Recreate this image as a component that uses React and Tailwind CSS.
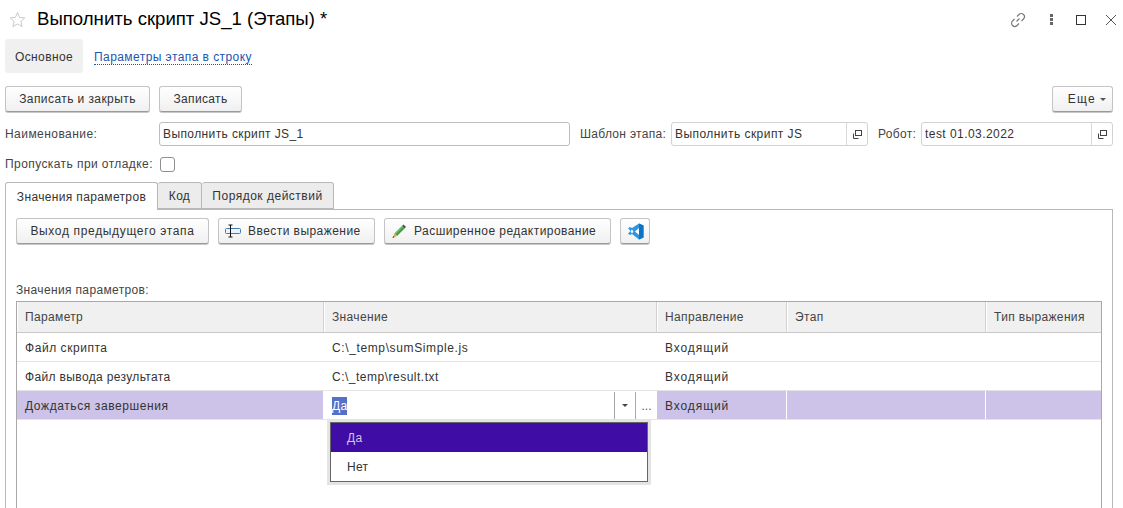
const Btn = ({ className = "", children }) => (
  <div className={"h-[26px] flex items-center rounded-[3px] border border-[#c4c4c4] border-b-[#9a9a9a] bg-gradient-to-b from-white to-[#f0f0f0] shadow-[0_1px_0_#c8c8c8] text-[12px] text-[#333] shrink-0 " + className}>
    {children}
  </div>
);

const Arrow = ({ color = "#555" }) => (
  <svg width="6" height="3" viewBox="0 0 6 3" fill={color}><path d="M0 0h6L3 3z" /></svg>
);

const Popout = () => (
  <svg width="11" height="11" viewBox="0 0 11 11" fill="none" stroke="#444">
    <rect x="3.5" y="1.5" width="6" height="5" />
    <path d="M1.500 4.500v5h5" />
  </svg>
);

const Field = ({ className = "", text }) => (
  <div className={"h-[24px] flex rounded-[3px] border border-[#d2d2d2] bg-white shrink-0 " + className}>
    <div className="flex-1 pl-[3px] flex items-center text-[12px] tracking-[0.45px] text-[#333]">{text}</div>
    <div className="w-[21px] border-l border-[#d8d8d8] flex items-center justify-center"><Popout /></div>
  </div>
);

const Head = ({ children, last }) => (
  <div className={"h-[30px] bg-[#f0f0f0] flex items-center pl-[8px] text-[12px] tracking-[0.35px] text-[#444] " + (last ? "shadow-[inset_1px_0_0_#fff]" : "shadow-[inset_-1px_0_0_#d2d2d2,inset_1px_0_0_#fff]")}>{children}</div>
);

const Cell = ({ children, sel, last, className = "tracking-[0.6px]" }) => (
  <div className={"h-[28px] pt-px flex items-center pl-[8px] text-[12px] text-[#333] " + className + " " + (sel ? "bg-[#cdc2e7] " : "") + (last ? "" : "border-r border-white")}>{children}</div>
);

const cols = "grid grid-cols-[307px_333px_130px_199px_1fr]";

export default function App() {
  return (
    <div className="w-[1123px] h-[508px] overflow-hidden bg-white flex flex-col font-['Liberation_Sans',Arial,sans-serif] relative">
      <div className="h-[39px] flex items-center pl-[9px] pr-[6px] shrink-0">
        <svg width="17" height="17" viewBox="0 0 17 17" fill="none" stroke="#c9c9c9" strokeWidth="1">
          <path d="M8.5 1.5l2.1 4.9 5.2.5-3.9 3.5 1.2 5.200-4.600-2.700-4.600 2.700 1.200-5.200L1.200 6.900l5.200-.5z" />
        </svg>
        <div className="ml-[11px] text-[18.6px] text-black leading-none">Выполнить скрипт JS_1 (Этапы) *</div>
        <div className="ml-auto flex items-center">
          <svg width="18" height="18" viewBox="0 0 18 18" fill="none" stroke="#777" strokeWidth="1.1">
            <path d="M7.500 10.500l3-3M8 5.500l2-2a3 3 0 0 1 4.500 4.500l-2 2M10 12.500l-2 2a3 3 0 0 1-4.500-4.500l2-2" />
          </svg>
          <div className="ml-[23px] flex flex-col gap-[1.500px]">
            <div className="w-[3px] h-[2.500px] bg-[#666]" />
            <div className="w-[3px] h-[2.500px] bg-[#666]" />
            <div className="w-[3px] h-[2.500px] bg-[#666]" />
          </div>
          <div className="ml-[23px] w-[10px] h-[10px] border border-[#333]" />
          <svg className="ml-[19px]" width="12" height="12" viewBox="0 0 12 12" stroke="#555" strokeWidth="1"><path d="M1 1l10 10M11 1L1 11" /></svg>
        </div>
      </div>

      <div className="h-[34px] flex items-center pl-[5px] shrink-0">
        <div className="h-[34px] w-[78px] pt-px rounded-[3px] bg-[#f0f0f0] flex items-center justify-center text-[12px] tracking-[0.4px] text-[#333]">Основное</div>
        <div className="ml-[11px] mt-[2px] text-[12px] tracking-[0.43px] text-[#1a56b0] border-b border-dotted border-[#1a56b0] leading-[14px]">Параметры этапа в строку</div>
      </div>

      <div className="mt-[13px] flex pl-[5px] pr-[10px] shrink-0">
        <Btn className="w-[145px] justify-center tracking-[0.42px]">Записать и закрыть</Btn>
        <Btn className="w-[83px] ml-[9px] justify-center tracking-[0.35px]">Записать</Btn>
        <Btn className="w-[61px] ml-auto justify-end pr-[6px] gap-[4px] tracking-[1.3px]">
          <span>Еще</span>
          <Arrow />
        </Btn>
      </div>

      <div className="mt-[10px] flex items-center pl-[5px] pr-[10px] shrink-0">
        <div className="w-[154px] text-[12px] tracking-[0.45px] text-[#444]">Наименование:</div>
        <div className="w-[411px] h-[24px] rounded-[3px] border border-[#bdbdbd] pl-[3px] flex items-center text-[12px] tracking-[0.4px] text-[#333]">Выполнить скрипт JS_1</div>
        <div className="ml-[10px] w-[91px] text-[12px] tracking-[0.3px] text-[#444]">Шаблон этапа:</div>
        <Field className="w-[197px]" text="Выполнить скрипт JS" />
        <div className="ml-[10px] w-[43px] text-[12px] tracking-[0.3px] text-[#444]">Робот:</div>
        <Field className="w-[192px]" text="test 01.03.2022" />
      </div>

      <div className="mt-[10px] h-[16px] flex items-center pl-[5px] shrink-0">
        <div className="w-[155px] text-[12px] tracking-[0.42px] text-[#444]">Пропускать при отладке:</div>
        <div className="w-[15px] h-[15px] rounded-[3px] border border-[#8f8f8f] bg-white" />
      </div>

      <div className="mt-[10px] flex pl-[5px] shrink-0 h-[28px] relative z-10">
        <div className="w-[153px] h-[28px] rounded-t-[3px] border border-[#b8b8b8] border-b-0 bg-white flex items-center justify-center text-[12px] tracking-[0.35px] text-[#333]">Значения параметров</div>
        <div className="w-[44px] h-[27px] rounded-t-[3px] border border-l-0 border-[#b8b8b8] bg-[#ececec] flex items-center justify-center text-[12px] tracking-[0.3px] text-[#333]">Код</div>
        <div className="w-[132px] h-[27px] rounded-t-[3px] border border-l-0 border-[#b8b8b8] bg-[#ececec] flex items-center justify-center text-[12px] tracking-[0.5px] text-[#333]">Порядок действий</div>
      </div>

      <div className="-mt-px ml-[5px] mr-[10px] h-[420px] shrink-0 border border-[#b8b8b8] pt-[8px] pl-[10px]">
        <div className="flex gap-[9px]">
          <Btn className="w-[193px] justify-center tracking-[0.66px]">Выход предыдущего этапа</Btn>
          <Btn className="w-[157px] pl-[6px] gap-[6px] tracking-[0.45px]">
            <svg width="17" height="14" viewBox="0 0 17 14" fill="none">
              <rect x="0.5" y="4.500" width="15" height="5" rx="1" fill="#eaf3fb" stroke="#3f7fb5" />
              <path d="M3.500 1h4M3.500 13h4M5.500 1v12" stroke="#111" strokeWidth="1" />
            </svg>
            <span>Ввести выражение</span>
          </Btn>
          <Btn className="w-[227px] pl-[6px] gap-[7px] tracking-[0.45px]">
            <svg width="16" height="16" viewBox="0 0 16 16">
              <path d="M12.500 1.500l2.500 2.500-1.500 1.500L11 3z" fill="#46505a" />
              <path d="M11 3l2.500 2.500-7.500 7.500-2.500-2.500z" fill="#3f9a45" />
              <path d="M11 3l1 1-7.500 7.500-1-1z" fill="#72c46a" />
              <path d="M3.500 10.500l2.500 2.500L1.500 15z" fill="#e3a75c" />
              <path d="M1.500 15l.7-2 1.300 1.300z" fill="#4a3a28" />
            </svg>
            <span>Расширенное редактирование</span>
          </Btn>
          <Btn className="w-[30px] justify-center">
            <svg width="19" height="19" viewBox="0 0 19 19">
              <path d="M13 1.500l4.500 2v12l-4.500 2-7-5.500-2 1-2-1.200 2.500-2.800-2.500-2.800 2-1.200 2 1z" fill="#2f97e0" />
              <path d="M13 6v7l-4-3.500z" fill="#fff" />
              <path d="M13 1.500l4.500 2v12l-4.500 2z" fill="#0c74c6" />
              <path d="M6 7.500l1.500 2-1.500 2-1.500-2z" fill="#fff" />
            </svg>
          </Btn>
        </div>

        <div className="mt-[39px] h-[14px] flex items-center text-[12px] tracking-[0.35px] text-[#444]">Значения параметров:</div>

        <div className="mt-[4px] w-[1086px] h-[400px] border border-[#a8a8a8]">
          <div className={cols + " border-b border-[#c8c8c8]"}>
            <Head>Параметр</Head>
            <Head>Значение</Head>
            <Head>Направление</Head>
            <Head>Этап</Head>
            <Head last>Тип выражения</Head>
          </div>
          <div className={cols + " border-b border-[#e4e4e4]"}>
            <Cell className="tracking-[0.55px]">Файл скрипта</Cell>
            <Cell className="tracking-[0.62px]">{"C:\\_temp\\sumSimple.js"}</Cell>
            <Cell className="tracking-[0.9px]">Входящий</Cell>
            <Cell />
            <Cell last />
          </div>
          <div className={cols + " border-b border-[#e4e4e4]"}>
            <Cell className="tracking-[0.35px]">Файл вывода результата</Cell>
            <Cell className="tracking-[0.5px]">{"C:\\_temp\\result.txt"}</Cell>
            <Cell className="tracking-[0.9px]">Входящий</Cell>
            <Cell />
            <Cell last />
          </div>
          <div className={cols + " border-b border-[#e4e4e4]"}>
            <Cell sel>Дождаться завершения</Cell>
            <div className="h-[28px] pt-px bg-white flex items-stretch">
              <div className="flex-1 pl-[8px] flex items-center text-[12px] tracking-[0.3px]">
                <span className="bg-[#5570c8] text-white">Да</span>
              </div>
              <div className="w-[21px] border-l border-[#a8a8a8] flex items-center justify-center">
                <Arrow color="#444" />
              </div>
              <div className="w-[22px] border-l border-[#a8a8a8] flex items-center justify-center text-[12px] text-[#555]">...</div>
            </div>
            <Cell sel className="tracking-[0.9px]">Входящий</Cell>
            <Cell sel />
            <Cell sel last />
          </div>
        </div>
      </div>

      <div className="absolute left-[327px] top-[419px] w-[324px] h-[66px] bg-[#e4e4e4] p-[3px]">
        <div className="h-[60px] border border-[#666] bg-white flex flex-col">
          <div className="h-[29px] bg-[#3f0ca5] text-[#cfc6e6] pl-[16px] flex items-center text-[12px] tracking-[0.3px]">Да</div>
          <div className="flex-1 pl-[16px] flex items-center text-[12px] tracking-[0.3px] text-[#333]">Нет</div>
        </div>
      </div>
    </div>
  );
}
